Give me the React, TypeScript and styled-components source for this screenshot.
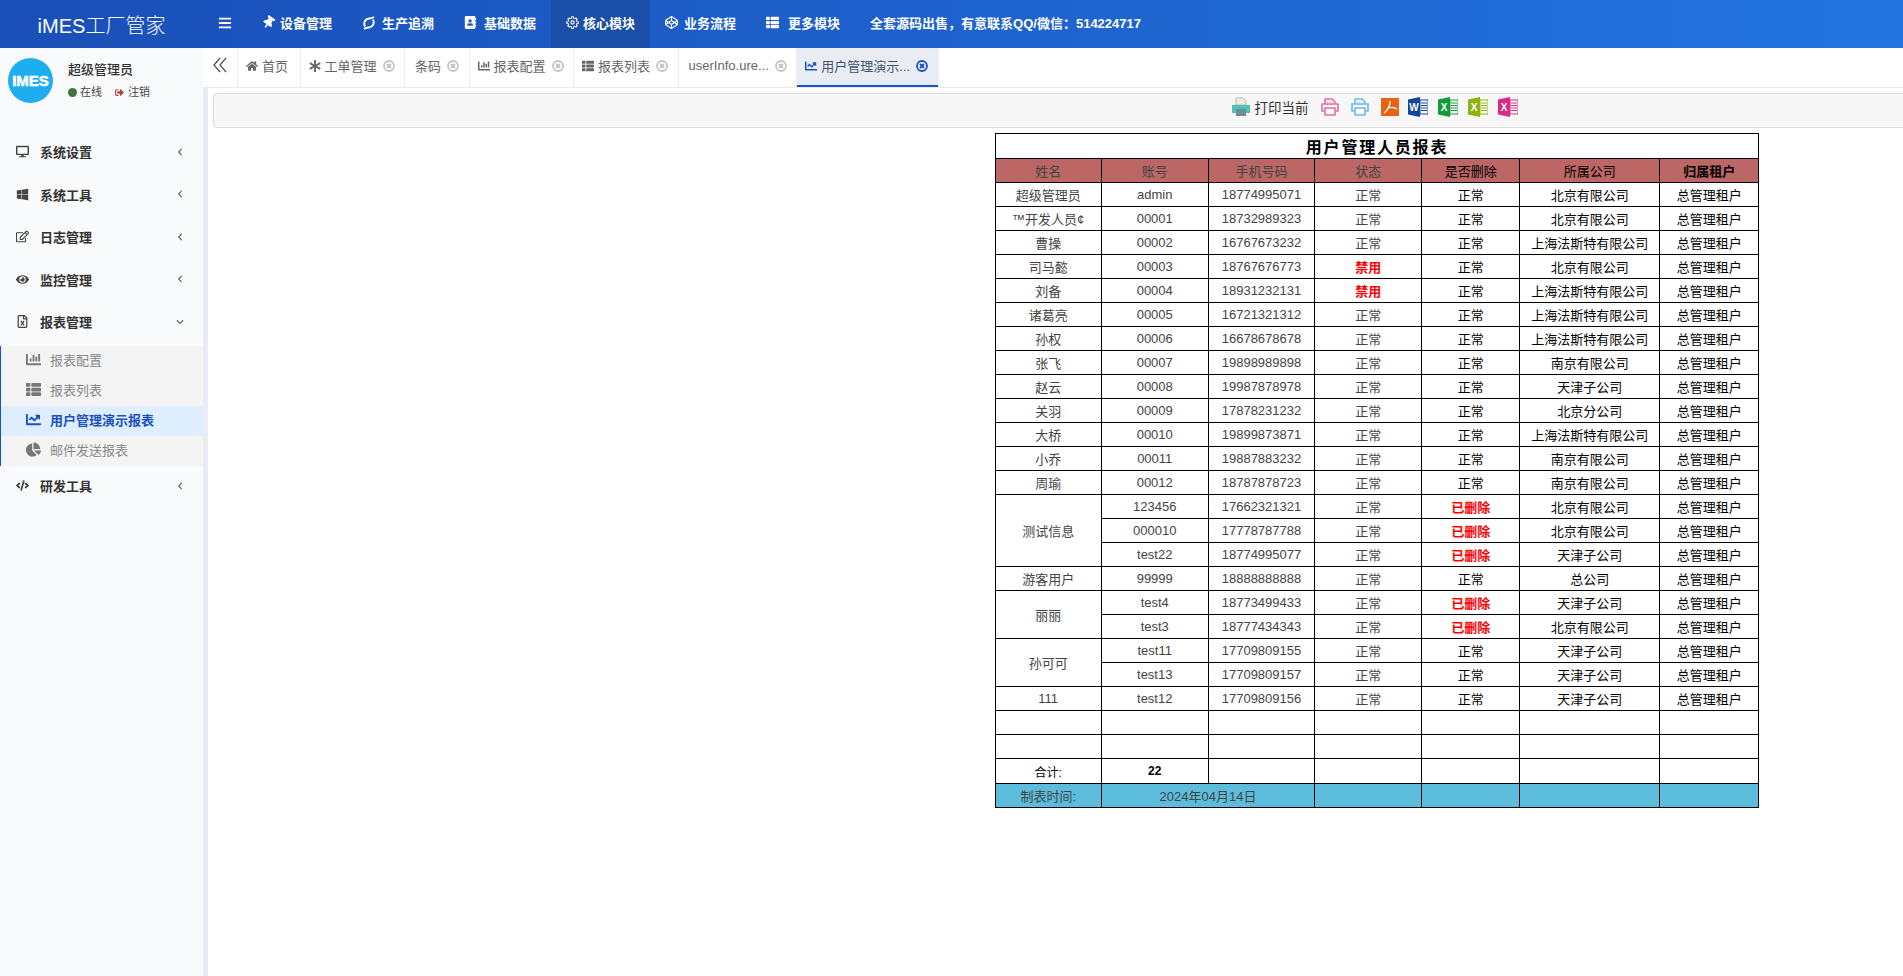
import React from 'react';
import styled, { createGlobalStyle } from 'styled-components';
import {
  FaAddressBook,
  FaAsterisk,
  FaBars,
  FaChartBar,
  FaChartLine,
  FaChartPie,
  FaChevronDown,
  FaChevronLeft,
  FaCode,
  FaCodepen,
  FaDesktop,
  FaEye,
  FaHome,
  FaRegEdit,
  FaRegFileExcel,
  FaSignOutAlt,
  FaThList,
  FaThumbtack,
  FaWindows,
} from 'react-icons/fa';
import { FiSettings } from 'react-icons/fi';

const GlobalStyle = createGlobalStyle`
  html, body {
    margin: 0;
    padding: 0;
    background: #fff;
    font-family: "Liberation Sans", "Noto Sans CJK SC", sans-serif;
  }
  * { box-sizing: border-box; }
`;

const Page = styled.div`
  width: 100vw;
  height: 100vh;
  display: flex;
  flex-direction: column;
  overflow: hidden;
`;

/* top bar */
const TopBar = styled.header`
  height: 48px;
  flex: none;
  display: flex;
  align-items: stretch;
  color: #fff;
  background: linear-gradient(90deg, #1a4fb9 0%, #2274e0 100%);
`;

const Logo = styled.div`
  width: 203px;
  flex: none;
  display: flex;
  align-items: center;
  justify-content: center;
  font-size: 20px;
  font-weight: 300;
`;

const Burger = styled.div`
  width: 44px;
  flex: none;
  display: flex;
  align-items: center;
  padding-left: 15px;
  margin-bottom: 3px;
  font-size: 14px;
`;

const NavItem = styled.div<{ $active?: boolean }>`
  display: flex;
  align-items: center;
  padding: 0 15px 3px;
  font-size: 13px;
  font-weight: 700;
  white-space: nowrap;
  background: ${(p) => (p.$active ? '#1b4ea6' : 'transparent')};
`;

const NavIcon = styled.span<{ $slot: number }>`
  width: ${(p) => p.$slot}px;
  display: flex;
  align-items: center;
  font-size: 13px;
`;

const SlantPin = styled(FaThumbtack)`
  transform: rotate(35deg);
`;

/* body */
const Body = styled.div`
  flex: 1;
  display: flex;
  min-height: 0;
`;

const Sidebar = styled.aside`
  width: 208px;
  flex: none;
  background: #f9fafc;
  border-right: 5px solid #e9edf3;
`;

const UserPanel = styled.div`
  height: 84px;
  display: flex;
  padding: 10px 0 0 8px;
`;

const Avatar = styled.div`
  width: 45px;
  height: 45px;
  border-radius: 50%;
  background: #1eaef0;
  color: #fff;
  display: flex;
  align-items: center;
  justify-content: center;
  font-size: 15px;
  font-weight: 700;
  -webkit-text-stroke: 0.6px #fff;
`;

const UserInfo = styled.div`
  margin-left: 15px;
  color: #333;
`;

const UserName = styled.div`
  margin-top: 3px;
  font-size: 13px;
  font-weight: 500;
  line-height: 18px;
`;

const UserStatus = styled.div`
  margin-top: 5px;
  display: flex;
  align-items: center;
  font-size: 11px;
  line-height: 16px;
  color: #444;
`;

const OnlineDot = styled.i`
  width: 9px;
  height: 9px;
  border-radius: 50%;
  background: #3c763d;
  margin-right: 3px;
`;

const Logout = styled.span`
  display: flex;
  margin: 0 4px 0 13px;
  font-size: 9px;
  color: #a94442;
`;

const MenuItem = styled.div`
  height: 42.5px;
  display: flex;
  align-items: center;
  padding: 0 0 3px 16px;
  font-size: 13px;
  font-weight: 600;
  color: #333;
`;

const MenuIcon = styled.span`
  width: 24px;
  display: flex;
  font-size: 13px;
  color: #444;
`;

const MenuArrow = styled.span`
  margin-left: auto;
  margin-right: 19px;
  display: flex;
  font-size: 8px;
  color: #666;
`;

const SubMenu = styled.div`
  margin-top: 1.5px;
  background: #f4f4f4;
  border-left: 1px solid #1a52c0;
`;

const SubItem = styled.div<{ $active?: boolean }>`
  height: 30px;
  display: flex;
  align-items: center;
  padding: 0 0 3px 25px;
  font-size: 13px;
  font-weight: ${(p) => (p.$active ? 600 : 400)};
  color: ${(p) => (p.$active ? '#1a52c0' : '#888')};
  background: ${(p) => (p.$active ? '#dfeeff' : 'transparent')};
`;

const SubIcon = styled.span<{ $active?: boolean }>`
  width: 24px;
  display: flex;
  font-size: 15px;
  color: ${(p) => (p.$active ? '#1a52c0' : '#777')};
`;

/* tabs */
const Main = styled.main`
  flex: 1;
  min-width: 0;
  margin-left: -5px;
  overflow: hidden;
`;

const TabBar = styled.div`
  height: 40px;
  display: flex;
  background: #fff;
  border-bottom: 1px solid #eaeaea;
`;

const Collapse = styled.div`
  width: 35px;
  flex: none;
  display: flex;
  align-items: center;
  padding: 0 0 5px 10px;
  border-right: 1px solid #eee;
  color: #555;
`;

const Tab = styled.div<{ $active?: boolean; $plain?: boolean }>`
  height: 39px;
  flex: none;
  display: flex;
  align-items: center;
  padding: 0 9.5px 4px ${(p) => (p.$plain ? 10 : 8)}px;
  font-size: 13px;
  white-space: nowrap;
  color: ${(p) => (p.$active ? '#44546f' : '#666')};
  background: ${(p) => (p.$active ? '#e9edf3' : '#fff')};
  border-right: 1px solid #eee;
  box-shadow: ${(p) => (p.$active ? 'inset 0 -2px 0 #1a52c0' : 'none')};
`;

const TabIcon = styled.span<{ $active?: boolean }>`
  display: flex;
  margin-right: 4px;
  font-size: 12px;
  color: ${(p) => (p.$active ? '#1a52c0' : '#666')};
`;

const TabClose = styled.svg`
  width: 12px;
  height: 12px;
  margin-left: 6px;
`;

const Close = ({ color }: { color: string }) => (
  <TabClose viewBox="0 0 12 12">
    <circle cx="6" cy="6" r="5" fill="none" stroke={color} strokeWidth="1.8" />
    <path d="M4 4l4 4M8 4l-4 4" stroke={color} strokeWidth="2" />
  </TabClose>
);

/* report */
const ReportFrame = styled.div`
  width: 2328px;
  margin: 5px 0 0 10px;
`;

const PrintBar = styled.div`
  height: 35px;
  display: flex;
  align-items: center;
  justify-content: center;
  padding: 0 6px 7px 0;
  background: #f7f7f7;
  border: 1px solid #ddd;
  border-radius: 4px;
`;

const PrintLabel = styled.span`
  margin: 0 11px 0 4px;
  font-size: 13.5px;
  color: #333;
`;

const BarIcon = styled.svg<{ $gap?: number }>`
  width: 20px;
  height: 20px;
  margin-right: ${(p) => p.$gap ?? 10}px;
  flex: none;
`;

const ReportTable = styled.table`
  width: 763.5px;
  margin: 5px auto 0;
  border-collapse: collapse;
  table-layout: fixed;
  font-size: 13px;
  color: #000;
`;

const TitleCell = styled.th`
  height: 25px;
  padding: 0;
  border: 1px solid #000;
  font-size: 16px;
  font-weight: 700;
  letter-spacing: 1.8px;
  text-align: center;
`;

const Cell = styled.td<{ $soft?: boolean; $bg?: string; $danger?: boolean; $strong?: boolean; $tall?: boolean }>`
  height: ${(p) => (p.$tall ? 25 : 24)}px;
  padding: 0;
  border: 1px solid #000;
  text-align: center;
  white-space: nowrap;
  font-size: ${(p) => (p.$tall ? 12 : 13)}px;
  font-weight: ${(p) => (p.$danger || p.$strong ? 700 : 400)};
  color: ${(p) => (p.$danger ? '#f00' : p.$soft ? '#444' : '#000')};
  background: ${(p) => p.$bg ?? 'transparent'};
`;

const printerPath = 'M5 7V2h7l3 3v2M4 14H2V7h16v7h-2M5 11h10v7H5z';

const Printer = ({ color, gap }: { color: string; gap?: number }) => (
  <BarIcon viewBox="0 0 20 20" $gap={gap}>
    <path d={printerPath} fill="#fff" stroke={color} strokeWidth="1.6" strokeLinejoin="round" />
    <path d="M7 5h6M7 7.5h6" stroke={color} strokeWidth="1" strokeDasharray="1 1" />
  </BarIcon>
);

const OfficeDoc = ({ color, letter, gap }: { color: string; letter: string; gap?: number }) => (
  <BarIcon viewBox="0 0 20 20" $gap={gap}>
    <path d="M0 2.5L12 0v20L0 17.5z" fill={color} />
    <path d="M12 3h8v14h-8z" fill="#fff" stroke={color} />
    <path d="M13 6h6M13 8.5h6M13 11h6M13 13.5h6" stroke={color} strokeWidth="1.2" />
    <text x="6" y="14" fontSize="10" fontWeight="700" fill="#fff" textAnchor="middle" fontFamily="Liberation Sans">
      {letter}
    </text>
  </BarIcon>
);

type Row = {
  name?: string;
  span?: number;
  account: string;
  phone: string;
  banned?: boolean;
  deleted?: boolean;
  company: string;
};

const SH = '上海法斯特有限公司';
const BJ = '北京有限公司';
const NJ = '南京有限公司';
const TJ = '天津子公司';

const rows: Row[] = [
  { name: '超级管理员', account: 'admin', phone: '18774995071', company: BJ },
  { name: '™开发人员¢', account: '00001', phone: '18732989323', company: BJ },
  { name: '曹操', account: '00002', phone: '16767673232', company: SH },
  { name: '司马懿', account: '00003', phone: '18767676773', banned: true, company: BJ },
  { name: '刘备', account: '00004', phone: '18931232131', banned: true, company: SH },
  { name: '诸葛亮', account: '00005', phone: '16721321312', company: SH },
  { name: '孙权', account: '00006', phone: '16678678678', company: SH },
  { name: '张飞', account: '00007', phone: '19898989898', company: NJ },
  { name: '赵云', account: '00008', phone: '19987878978', company: TJ },
  { name: '关羽', account: '00009', phone: '17878231232', company: '北京分公司' },
  { name: '大桥', account: '00010', phone: '19899873871', company: SH },
  { name: '小乔', account: '00011', phone: '19887883232', company: NJ },
  { name: '周瑜', account: '00012', phone: '18787878723', company: NJ },
  { name: '测试信息', span: 3, account: '123456', phone: '17662321321', deleted: true, company: BJ },
  { account: '000010', phone: '17778787788', deleted: true, company: BJ },
  { account: 'test22', phone: '18774995077', deleted: true, company: TJ },
  { name: '游客用户', account: '99999', phone: '18888888888', company: '总公司' },
  { name: '丽丽', span: 2, account: 'test4', phone: '18773499433', deleted: true, company: TJ },
  { account: 'test3', phone: '18777434343', deleted: true, company: BJ },
  { name: '孙可可', span: 2, account: 'test11', phone: '17709809155', company: TJ },
  { account: 'test13', phone: '17709809157', company: TJ },
  { name: '111', account: 'test12', phone: '17709809156', company: TJ },
];

const colWidths = [106, 107, 106.5, 107, 98, 140, 99];
const RED = '#bc6666';
const BLUE = '#5bbcdc';

const TraceIcon = () => (
  <svg width="14" height="14" viewBox="0 0 14 14" fill="none" stroke="currentColor" strokeWidth="2">
    <path d="M3 10.5C1 7 3 3 7 2.5c1.5-.2 3 0 5-1.5M11 3.5c2 3.500 0 7.500-4 8-1.500.2-3 0-5 1.500" />
  </svg>
);

const navItems = [
  { label: '设备管理', slot: 18, icon: <SlantPin /> },
  { label: '生产追溯', slot: 20, icon: <TraceIcon /> },
  { label: '基础数据', slot: 20, icon: <FaAddressBook /> },
  { label: '核心模块', slot: 17, icon: <FiSettings />, active: true },
  { label: '业务流程', slot: 19, icon: <FaCodepen /> },
  { label: '更多模块', slot: 22, icon: <FaThList /> },
];

const tabs = [
  { label: '工单管理', icon: <FaAsterisk /> },
  { label: '条码' },
  { label: '报表配置', icon: <FaChartBar /> },
  { label: '报表列表', icon: <FaThList /> },
  { label: 'userInfo.ure...' },
];

const App = () => (
  <Page>
    <GlobalStyle />
    <TopBar>
      <Logo>iMES工厂管家</Logo>
      <Burger>
        <FaBars />
      </Burger>
      {navItems.map((item) => (
        <NavItem key={item.label} $active={item.active}>
          <NavIcon $slot={item.slot}>{item.icon}</NavIcon>
          {item.label}
        </NavItem>
      ))}
      <NavItem>全套源码出售，有意联系QQ/微信：514224717</NavItem>
    </TopBar>
    <Body>
      <Sidebar>
        <UserPanel>
          <Avatar>IMES</Avatar>
          <UserInfo>
            <UserName>超级管理员</UserName>
            <UserStatus>
              <OnlineDot />
              在线
              <Logout>
                <FaSignOutAlt />
              </Logout>
              注销
            </UserStatus>
          </UserInfo>
        </UserPanel>
        <MenuItem>
          <MenuIcon><FaDesktop /></MenuIcon>系统设置<MenuArrow><FaChevronLeft /></MenuArrow>
        </MenuItem>
        <MenuItem>
          <MenuIcon><FaWindows /></MenuIcon>系统工具<MenuArrow><FaChevronLeft /></MenuArrow>
        </MenuItem>
        <MenuItem>
          <MenuIcon><FaRegEdit /></MenuIcon>日志管理<MenuArrow><FaChevronLeft /></MenuArrow>
        </MenuItem>
        <MenuItem>
          <MenuIcon><FaEye /></MenuIcon>监控管理<MenuArrow><FaChevronLeft /></MenuArrow>
        </MenuItem>
        <MenuItem>
          <MenuIcon><FaRegFileExcel /></MenuIcon>报表管理<MenuArrow><FaChevronDown /></MenuArrow>
        </MenuItem>
        <SubMenu>
          <SubItem><SubIcon><FaChartBar /></SubIcon>报表配置</SubItem>
          <SubItem><SubIcon><FaThList /></SubIcon>报表列表</SubItem>
          <SubItem $active><SubIcon $active><FaChartLine /></SubIcon>用户管理演示报表</SubItem>
          <SubItem><SubIcon><FaChartPie /></SubIcon>邮件发送报表</SubItem>
        </SubMenu>
        <MenuItem>
          <MenuIcon><FaCode /></MenuIcon>研发工具<MenuArrow><FaChevronLeft /></MenuArrow>
        </MenuItem>
      </Sidebar>
      <Main>
        <TabBar>
          <Collapse>
            <svg width="14" height="16" viewBox="0 0 14 16" fill="none" stroke="currentColor" strokeWidth="1.3">
              <path d="M7 1L1 8l6 7M13 1L7 8l6 7" />
            </svg>
          </Collapse>
          <Tab>
            <TabIcon><FaHome /></TabIcon>首页
            <span style={{ width: 2 }} />
          </Tab>
          {tabs.map((tab) => (
            <Tab key={tab.label} $plain={!tab.icon}>
              {tab.icon && <TabIcon>{tab.icon}</TabIcon>}
              {tab.label}
              <Close color="#c4c4c4" />
            </Tab>
          ))}
          <Tab $active>
            <TabIcon $active><FaChartLine /></TabIcon>用户管理演示...
            <Close color="#1a52c0" />
          </Tab>
        </TabBar>
        <ReportFrame>
          <PrintBar>
            <BarIcon viewBox="0 0 20 20" $gap={0}>
              <path d="M5 8V1h7l3 3v4z" fill="#f1eedd" stroke="#bbb" />
              <path d="M1 8h18v8H1z" fill="#4cc4b4" />
              <path d="M5 12h10v7H5z" fill="#6f8f98" />
            </BarIcon>
            <PrintLabel>打印当前</PrintLabel>
            <Printer color="#e56aa8" />
            <Printer color="#6cb8ee" />
            <BarIcon viewBox="0 0 20 20" $gap={8}>
              <path d="M1 1h18v18H1z" fill="#e8630f" />
              <path d="M10 4c0 5-2 9-6 12M8 11c3-1 6-1 9 1" fill="none" stroke="#fff" strokeWidth="1.3" />
            </BarIcon>
            <OfficeDoc color="#10479c" letter="W" />
            <OfficeDoc color="#129a3c" letter="X" />
            <OfficeDoc color="#8db30d" letter="X" />
            <OfficeDoc color="#d92a85" letter="X" gap={0} />
          </PrintBar>
          <ReportTable>
            <colgroup>
              {colWidths.map((w, i) => (
                <col key={i} width={w} />
              ))}
            </colgroup>
            <thead>
              <tr>
                <TitleCell colSpan={7}>用户管理人员报表</TitleCell>
              </tr>
              <tr>
                <Cell as="th" $soft $bg={RED} style={{ fontWeight: 400 }}>姓名</Cell>
                <Cell as="th" $soft $bg={RED} style={{ fontWeight: 400 }}>账号</Cell>
                <Cell as="th" $soft $bg={RED} style={{ fontWeight: 400 }}>手机号码</Cell>
                <Cell as="th" $soft $bg={RED} style={{ fontWeight: 400 }}>状态</Cell>
                <Cell as="th" $bg={RED} style={{ fontWeight: 400 }}>是否删除</Cell>
                <Cell as="th" $bg={RED} style={{ fontWeight: 400 }}>所属公司</Cell>
                <Cell as="th" $strong $bg={RED}>归属租户</Cell>
              </tr>
            </thead>
            <tbody>
              {rows.map((row) => (
                <tr key={row.account}>
                  {row.name && (
                    <Cell $soft rowSpan={row.span}>
                      {row.name}
                    </Cell>
                  )}
                  <Cell $soft>{row.account}</Cell>
                  <Cell $soft>{row.phone}</Cell>
                  <Cell $soft={!row.banned} $danger={row.banned}>
                    {row.banned ? '禁用' : '正常'}
                  </Cell>
                  <Cell $danger={row.deleted}>{row.deleted ? '已删除' : '正常'}</Cell>
                  <Cell>{row.company}</Cell>
                  <Cell>总管理租户</Cell>
                </tr>
              ))}
              {[0, 1].map((n) => (
                <tr key={n}>
                  {colWidths.map((_, i) => (
                    <Cell key={i} />
                  ))}
                </tr>
              ))}
              <tr>
                <Cell $tall>合计:</Cell>
                <Cell $tall $strong>22</Cell>
                {[0, 1, 2, 3, 4].map((i) => (
                  <Cell key={i} $tall />
                ))}
              </tr>
              <tr>
                <Cell $soft $bg={BLUE}>制表时间:</Cell>
                <Cell $soft $bg={BLUE} colSpan={2}>2024年04月14日</Cell>
                {[0, 1, 2, 3].map((i) => (
                  <Cell key={i} $bg={BLUE} />
                ))}
              </tr>
            </tbody>
          </ReportTable>
        </ReportFrame>
      </Main>
    </Body>
  </Page>
);

export default App;
